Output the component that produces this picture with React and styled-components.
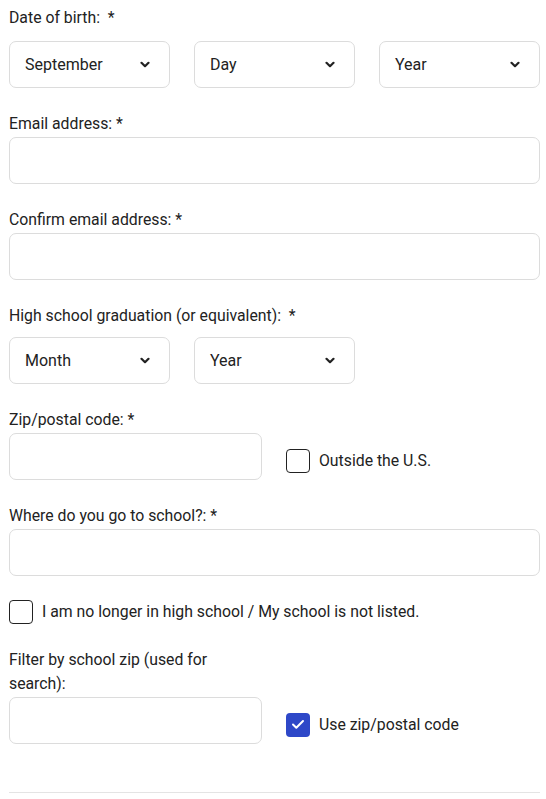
import React from "react";
import styled, { createGlobalStyle } from "styled-components";

const GlobalStyle = createGlobalStyle`
  html, body {
    margin: 0;
    padding: 0;
    background: #ffffff;
  }
  body {
    font-family: Roboto, "Liberation Sans", Arial, sans-serif;
    color: #222222;
  }
`;

const Form = styled.form`
  width: 531px;
  padding: 6px 0 0 9px;
  display: flex;
  flex-direction: column;
  gap: 24px;
`;

const Field = styled.div`
  display: flex;
  flex-direction: column;
  gap: ${({ $gap }) => $gap ?? 1}px;
`;

const Label = styled.label`
  font-size: 15.8px;
  line-height: 24px;
  color: #222222;
  max-width: ${({ $narrow }) => ($narrow ? "220px" : "none")};
`;

const SelectRow = styled.div`
  display: grid;
  grid-template-columns: repeat(3, 161px);
  column-gap: 24px;
`;

const SelectBox = styled.div`
  box-sizing: border-box;
  height: 47px;
  border: 1px solid #dcdcdc;
  border-radius: 7px;
  padding: 0 19px 0 15px;
  display: flex;
  align-items: center;
  justify-content: space-between;
  font-size: 16px;
  color: #222222;
  background: #fff;
`;

const Chevron = () => (
  <svg width="10" height="7" viewBox="0 0 10 7">
    <path d="M1.5 1.8L5 5.2l3.5-3.4" fill="none" stroke="#222" strokeWidth="2.2" strokeLinecap="round" strokeLinejoin="round" />
  </svg>
);

const Input = styled.input`
  box-sizing: border-box;
  width: ${({ $half }) => ($half ? "253px" : "100%")};
  height: 47px;
  border: 1px solid #dcdcdc;
  border-radius: 7px;
  font-size: 16px;
  padding: 0 14px;
  outline: none;
  background: #fff;
`;

const InlineRow = styled.div`
  display: flex;
  align-items: center;
  gap: 24px;

  & > label {
    margin-top: 8px;
  }
`;

const CheckLabel = styled.label`
  display: flex;
  align-items: center;
  gap: 9px;
  font-size: 15.8px;
  line-height: 24px;
  color: #222222;
`;

const Box = styled.span`
  box-sizing: border-box;
  width: 24px;
  height: 24px;
  border-radius: 4px;
  border: ${({ $checked }) => ($checked ? "none" : "1.5px solid #222")};
  background: ${({ $checked }) => ($checked ? "#2e48c8" : "#fff")};
  display: flex;
  align-items: center;
  justify-content: center;
  flex-shrink: 0;
`;

const DividerWrap = styled.div`
  width: 531px;
  padding: 0 0 0 9px;
`;

const Divider = styled.hr`
  border: none;
  border-top: 1px solid #e4e4e4;
  margin: 48px 0 0;
`;

const Checkbox = ({ checked, children }) => (
  <CheckLabel>
    <Box $checked={checked}>
      {checked && (
        <svg width="14" height="11" viewBox="0 0 14 11">
          <path d="M2 5.5l3.3 3.3L12 2" fill="none" stroke="#fff" strokeWidth="2" strokeLinecap="round" strokeLinejoin="round" />
        </svg>
      )}
    </Box>
    {children}
  </CheckLabel>
);

const Select = ({ value }) => (
  <SelectBox>
    <span>{value}</span>
    <Chevron />
  </SelectBox>
);

export default function App() {
  return (
    <>
      <GlobalStyle />
      <Form>
        <Field $gap={11}>
          <Label>Date of birth:&nbsp; *</Label>
          <SelectRow>
            <Select value="September" />
            <Select value="Day" />
            <Select value="Year" />
          </SelectRow>
        </Field>

        <Field>
          <Label>Email address: *</Label>
          <Input type="email" />
        </Field>

        <Field>
          <Label>Confirm email address: *</Label>
          <Input type="email" />
        </Field>

        <Field $gap={9}>
          <Label>High school graduation (or equivalent):&nbsp; *</Label>
          <SelectRow>
            <Select value="Month" />
            <Select value="Year" />
          </SelectRow>
        </Field>

        <Field>
          <Label>Zip/postal code: *</Label>
          <InlineRow>
            <Input $half />
            <Checkbox>Outside the U.S.</Checkbox>
          </InlineRow>
        </Field>

        <Field>
          <Label>Where do you go to school?: *</Label>
          <Input />
        </Field>

        <Checkbox>I am no longer in high school / My school is not listed.</Checkbox>

        <Field>
          <Label $narrow>Filter by school zip (used for search):</Label>
          <InlineRow>
            <Input $half />
            <Checkbox checked>Use zip/postal code</Checkbox>
          </InlineRow>
        </Field>
      </Form>
      <DividerWrap>
        <Divider />
      </DividerWrap>
    </>
  );
}
